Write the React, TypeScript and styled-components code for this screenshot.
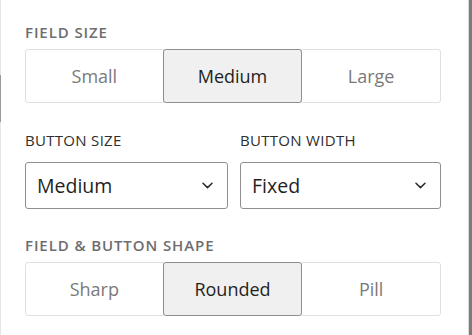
import React, { useState } from 'react'
import styled, { createGlobalStyle } from 'styled-components'

const GlobalStyle = createGlobalStyle`
  html, body {
    margin: 0;
    padding: 0;
    background: #ffffff;
  }
  body {
    font-family: "Open Sans", "Noto Sans", sans-serif;
  }
`

const fieldSizes = ['Small', 'Medium', 'Large']
const shapes = ['Sharp', 'Rounded', 'Pill']

const Chevron = () => (
  <svg width="11" height="7" viewBox="0 0 11 7" fill="none">
    <path d="M1 1.2 L5.5 5.6 L10 1.2" stroke="#2b2b2b" strokeWidth="1.5" strokeLinecap="round" strokeLinejoin="round" />
  </svg>
)

const App = () => {
  const [fieldSize, setFieldSize] = useState('Medium')
  const [shape, setShape] = useState('Rounded')

  return (
    <>
      <GlobalStyle />
      <Page>
        <Panel>
          <Section>
            <Label strong>Field size</Label>
            <Segmented>
              {fieldSizes.map((s) => (
                <Segment key={s} active={s === fieldSize} onClick={() => setFieldSize(s)}>
                  {s}
                </Segment>
              ))}
            </Segmented>
          </Section>

          <Row>
            <Field>
              <Label gap={12}>Button size</Label>
              <SelectBox>
                <Value>Medium</Value>
                <Chevron />
              </SelectBox>
            </Field>
            <Field>
              <Label gap={12}>Button width</Label>
              <SelectBox>
                <Value>Fixed</Value>
                <Chevron />
              </SelectBox>
            </Field>
          </Row>

          <Section>
            <Label strong>Field &amp; button shape</Label>
            <Segmented>
              {shapes.map((s) => (
                <Segment key={s} active={s === shape} onClick={() => setShape(s)}>
                  {s}
                </Segment>
              ))}
            </Segmented>
          </Section>
        </Panel>
        <Track>
          <TrackEdge />
          <Thumb />
        </Track>
      </Page>
    </>
  )
}

export default App

const Page = styled.div`
  width: 472px;
  height: 335px;
  display: flex;
  overflow: hidden;
`
const Panel = styled.div`
  flex: 1;
  position: relative;
  border-left: 1px solid #e6e6e6;
  padding: 22px 27px 0 24px;
  display: flex;
  flex-direction: column;
  gap: 26px;

  &::before {
    content: '';
    position: absolute;
    left: -1px;
    top: 75px;
    width: 1px;
    height: 47px;
    background: #9a9a9a;
  }
`
const Section = styled.div`
  display: flex;
  flex-direction: column;
`
const Label = styled.div<{ strong?: boolean; gap?: number }>`
  font-size: 15px;
  line-height: 20px;
  text-transform: uppercase;
  font-weight: ${(p) => (p.strong ? 600 : 400)};
  color: ${(p) => (p.strong ? '#6e6e6e' : '#2e2e2e')};
  letter-spacing: ${(p) => (p.strong ? '0.9px' : '0.3px')};
  margin-bottom: ${(p) => (p.gap ?? 7)}px;
  white-space: nowrap;
`
const Segmented = styled.div`
  display: grid;
  grid-template-columns: 1fr 1fr 1fr;
  height: 54px;
`
const Segment = styled.button<{ active: boolean }>`
  position: relative;
  z-index: ${(p) => (p.active ? 1 : 0)};
  margin-left: -1px;
  border: 1px solid ${(p) => (p.active ? '#8e8e8e' : '#e0e0e0')};
  background: ${(p) => (p.active ? '#f0f0f0' : '#ffffff')};
  color: ${(p) => (p.active ? '#1f1f1f' : '#7a7a7a')};
  font-family: "Open Sans", "Noto Sans", sans-serif;
  font-size: 18px;
  padding: 0;
  cursor: pointer;
  border-radius: ${(p) => (p.active ? '3px' : '0')};

  &:first-child {
    margin-left: 0;
    border-radius: 3px 0 0 3px;
  }
  &:last-child {
    border-radius: 0 3px 3px 0;
  }
`
const Row = styled.div`
  display: grid;
  grid-template-columns: 203px 201px;
  column-gap: 12px;
  margin-top: 1px;
`
const Field = styled.div`
  display: flex;
  flex-direction: column;
`
const SelectBox = styled.div`
  height: 47px;
  box-sizing: border-box;
  border: 1px solid #8f8f8f;
  border-radius: 3px;
  display: flex;
  align-items: center;
  justify-content: space-between;
  padding: 0 14px 0 11px;
  cursor: pointer;
`
const Value = styled.span`
  font-size: 19.5px;
  color: #1f1f1f;
`
const Track = styled.div`
  width: 4px;
  display: flex;
`
const TrackEdge = styled.div`
  width: 1px;
  background: #dadada;
`
const Thumb = styled.div`
  flex: 1;
  background: #7b7b7b;
`
